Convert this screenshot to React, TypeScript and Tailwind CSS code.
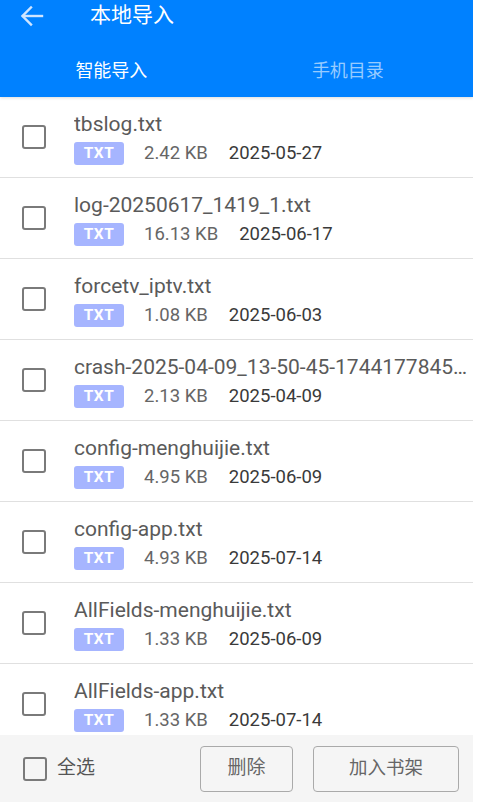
import React from "react";

const files = [
  { name: "tbslog.txt", size: "2.42 KB", date: "2025-05-27" },
  { name: "log-20250617_1419_1.txt", size: "16.13 KB", date: "2025-06-17" },
  { name: "forcetv_iptv.txt", size: "1.08 KB", date: "2025-06-03" },
  { name: "crash-2025-04-09_13-50-45-1744177845123.txt", size: "2.13 KB", date: "2025-04-09" },
  { name: "config-menghuijie.txt", size: "4.95 KB", date: "2025-06-09" },
  { name: "config-app.txt", size: "4.93 KB", date: "2025-07-14" },
  { name: "AllFields-menghuijie.txt", size: "1.33 KB", date: "2025-06-09" },
  { name: "AllFields-app.txt", size: "1.33 KB", date: "2025-07-14" },
];

function Box() {
  return <div className="w-[24px] h-[24px] border-[2.5px] border-[#7a7a7a] rounded-[3px] shrink-0" />;
}

export default function App() {
  return (
    <div
      className="w-[473px] h-[802px] flex flex-col bg-white overflow-hidden"
      style={{ fontFamily: "Roboto, 'Noto Sans CJK SC', sans-serif" }}
    >
      <header className="h-[97px] bg-[#0081ff] shrink-0 relative z-10 shadow-[0_1px_3px_rgba(0,0,0,0.14)]">
        <div className="h-[43px] flex items-start pt-[3px]">
          <svg width="24" height="24" viewBox="0 0 24 24" className="ml-[20px] mt-[1px]" fill="none" stroke="#cfe5ff" strokeWidth="2.4" strokeLinecap="square">
            <path d="M22 12H3" />
            <path d="M11 3.5L2.5 12L11 20.5" />
          </svg>
          <div className="ml-[46px] text-[21px] leading-[24px] text-white">本地导入</div>
        </div>
        <div className="h-[54px] flex">
          <div className="w-[227px] flex items-center justify-center text-[18px] text-white">智能导入</div>
          <div className="w-[255px] flex items-center justify-center text-[18px] text-white/60">手机目录</div>
        </div>
      </header>
      <div className="flex-1 overflow-hidden">
        {files.map((f) => (
          <div key={f.name} className="h-[81px] flex items-start border-b border-[#e0e0e0]">
            <div className="h-[80px] flex items-center pl-[22px]">
              <Box />
            </div>
            <div className="ml-[28px] flex-1 min-w-0 pt-[14px]">
              <div className="text-[21px] leading-[26px] text-[#5a5a5a] truncate">{f.name}</div>
              <div className="mt-[5px] h-[23px] flex items-center">
                <div className="w-[50px] h-[23px] rounded-[3px] bg-[#a6b5ff] text-white text-[15.5px] font-bold flex items-center justify-center tracking-[0.5px]">
                  TXT
                </div>
                <span className="ml-[20px] text-[18.5px] leading-[23px] text-[#666666]">{f.size}</span>
                <span className="ml-[21px] text-[18.5px] leading-[23px] text-[#3a3a3a]">{f.date}</span>
              </div>
            </div>
          </div>
        ))}
      </div>
      <footer className="h-[67px] shrink-0 bg-[#f5f5f5] flex items-center">
        <div className="ml-[23px]">
          <Box />
        </div>
        <span className="ml-[10px] text-[19px] text-[#555555]">全选</span>
        <button className="ml-auto w-[93px] h-[46px] rounded-[4px] border-[1.5px] border-[#aaaaaa] text-[19px] text-[#666666] flex items-center justify-center">
          删除
        </button>
        <button className="ml-[20px] mr-[14px] w-[146px] h-[46px] rounded-[4px] border-[1.5px] border-[#aaaaaa] text-[18.5px] text-[#666666] flex items-center justify-center">
          加入书架
        </button>
      </footer>
    </div>
  );
}
